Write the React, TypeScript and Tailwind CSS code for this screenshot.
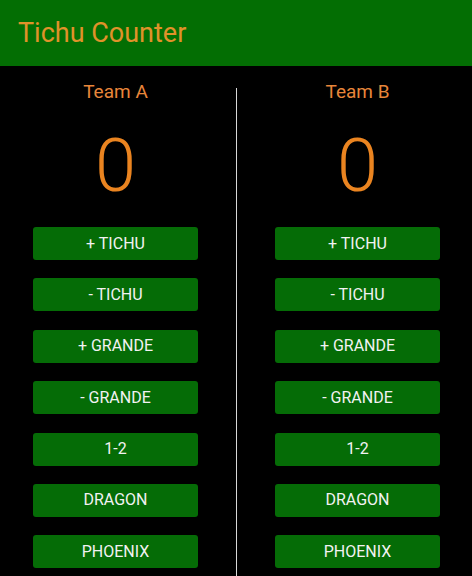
import React from "react";

const labels = ["+ TICHU", "- TICHU", "+ GRANDE", "- GRANDE", "1-2", "DRAGON", "PHOENIX"];

function Column({ name, className }: { name: string; className: string }) {
  return (
    <div className={"flex flex-col items-stretch " + className}>
      <div className="h-[24px] mt-[13px] flex items-center justify-center text-[19px] leading-none text-[#e8863a]">
        {name}
      </div>
      <div className="h-[96px] mt-[15px] flex items-center justify-center text-[74px] font-light leading-none text-[#ea8420]">
        0
      </div>
      <div className="mt-[13px] flex flex-col gap-[18.4px]">
        {labels.map((l) => (
          <div
            key={l}
            className="h-[33px] rounded-[3px] bg-[#056c06] flex items-center justify-center text-[16px] leading-none text-[#f2f2f2]"
          >
            {l}
          </div>
        ))}
      </div>
    </div>
  );
}

export default function App() {
  return (
    <div
      className="w-[472px] h-[576px] bg-black overflow-hidden flex flex-col"
      style={{ fontFamily: "Roboto, 'Noto Sans', sans-serif" }}
    >
      <div className="h-[66px] shrink-0 bg-[#036e03] flex items-center px-[18px]">
        <span className="text-[27px] leading-none text-[#e0922a]">Tichu Counter</span>
      </div>
      <div className="flex-1 flex">
        <Column name="Team A" className="w-[236px] pl-[33px] pr-[38px]" />
        <div className="w-px mt-[22px] bg-[#d8d8d8]" />
        <Column name="Team B" className="w-[235px] pl-[38px] pr-[32px]" />
      </div>
    </div>
  );
}
